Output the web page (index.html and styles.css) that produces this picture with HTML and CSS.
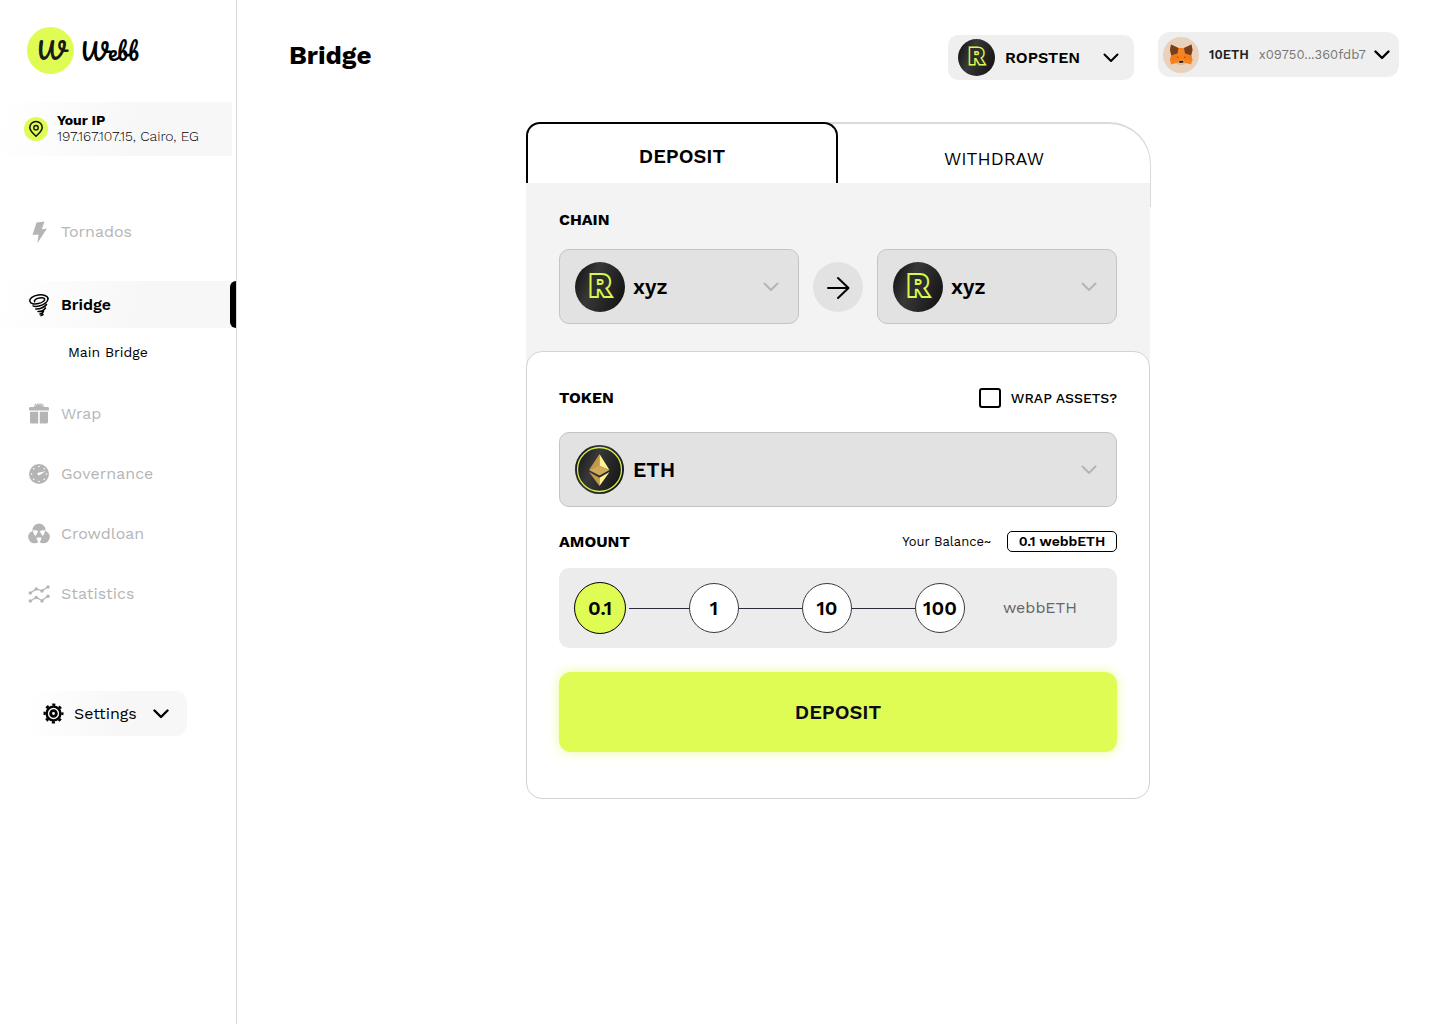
FILE: index.html
```html
<!DOCTYPE html>
<html lang="en">
<head>
<meta charset="utf-8">
<meta name="viewport" content="width=device-width, initial-scale=1">
<title>Webb - Bridge</title>
<link rel="stylesheet" href="styles.css">
</head>
<body>
<svg class="defs" width="0" height="0" aria-hidden="true">
  <defs>
    <linearGradient id="coin" x1="0" y1="0.3" x2="1" y2="0.7">
      <stop offset="0" stop-color="#171717"/>
      <stop offset="0.35" stop-color="#383838"/>
      <stop offset="0.6" stop-color="#2a2a2a"/>
      <stop offset="1" stop-color="#141414"/>
    </linearGradient>
    <symbol id="ropsten" viewBox="0 0 50 50">
      <circle cx="25" cy="25" r="25" fill="url(#coin)"/>
      <text x="25" y="34" text-anchor="middle" class="coin-letter">R</text>
    </symbol>
    <symbol id="chevron" viewBox="0 0 16 10">
      <path d="M1.500 1.500 8 8l6.500-6.500" fill="none" stroke="currentColor" stroke-linecap="round" stroke-linejoin="round"/>
    </symbol>
  </defs>
</svg>
<div class="app">
  <aside class="sidebar">
    <a class="logo" href="#"><span class="logo-mark" aria-hidden="true">W</span><span class="logo-name">Webb</span></a>

    <div class="ip">
      <svg class="ip-icon" viewBox="0 0 24 24" aria-hidden="true">
        <circle cx="12" cy="12" r="12" fill="#defc54"/>
        <path d="M12 19.200C8.300 16 5.800 13.300 5.800 10.600a6.200 6.200 0 0 1 12.400 0C18.200 13.300 15.700 16 12 19.200Z" fill="none" stroke="#111" stroke-width="1.500"/>
        <circle cx="12" cy="10.700" r="2.200" fill="none" stroke="#111" stroke-width="1.400"/>
      </svg>
      <div class="ip-text">
        <strong>Your IP</strong>
        <span>197.167.107.15, Cairo, EG</span>
      </div>
    </div>

    <nav class="nav" aria-label="Main">
      <a class="nav-item first" href="#">
        <svg viewBox="0 0 24 24"><path d="M9.500 2.500 17.500 1.500 14.800 9.200l5.200-.7L10.500 23l1-8.500-6 .5Z"/></svg>
        Tornados
      </a>
      <a class="nav-item active" href="#" aria-current="page">
        <svg class="stroked" viewBox="0 0 24 24">
          <path d="M21 5.500C20.700 2.700 16.200 1.300 11.200 2 6 2.800 2.300 5.500 2.800 8.200c.4 2.500 4.400 3.400 8.600 2.400 4-1 6.800-3.100 6.200-4.700-.6-1.400-4-1.600-7-.5-2.400 1-3.700 2.300-3 3.300"/>
          <path d="M21 5.500c.1 3.500-4 6.500-8.900 7.600-2.300.5-4.600.4-6-.3M19.500 11.500c-1.500 2.500-6.500 4.800-10.700 4.500M18.500 15c-1.500 2-4.700 3.700-7.500 3.600M16.500 18.500c-.8 1.300-2 2.200-3.500 2.500M16 21.500l-2 1.200"/>
        </svg>
        Bridge
      </a>
      <a class="nav-sub" href="#">Main Bridge</a>
      <a class="nav-item" href="#">
        <svg viewBox="0 0 24 24">
          <path d="M2 6.500C2 5.500 2.600 5 3.500 5h17c.9 0 1.500.5 1.500 1.500v1.500c0 .3-.2.500-.5.500h-19c-.3 0-.5-.2-.5-.5ZM3 9.800h8.200V21.500H4.500c-.8 0-1.500-.7-1.500-1.500ZM12.800 9.800H21V20c0 .8-.7 1.500-1.500 1.500h-6.700Z"/>
          <path class="line" d="M12 5 8 2M12 5l4-3M12 5l-1.400-3.700M12 5l1.400-3.700M11 5 6.800 3.800M13 5l4.200-1.200"/>
        </svg>
        Wrap
      </a>
      <a class="nav-item" href="#">
        <svg viewBox="0 0 24 24">
          <circle cx="12" cy="12" r="10"/>
          <g class="cut"><circle cx="12" cy="4.500" r="0.800"/><circle cx="6.700" cy="6.700" r="0.800"/><circle cx="4.500" cy="12" r="0.800"/><circle cx="6.700" cy="17.300" r="0.800"/><circle cx="12" cy="19.500" r="0.800"/><circle cx="17.300" cy="17.300" r="0.800"/><circle cx="19.500" cy="12" r="0.800"/><circle cx="17.300" cy="6.700" r="0.800"/><path d="M11 10.700 18.500 9.300l-5.700 3.600a1.400 1.400 0 1 1-1.800-2.200Z"/></g>
        </svg>
        Governance
      </a>
      <a class="nav-item" href="#">
        <svg viewBox="0 0 24 24">
          <circle cx="12" cy="8" r="6.500"/><circle cx="7.500" cy="15" r="6.300"/><circle cx="16.500" cy="15" r="6.300"/>
          <path class="cut" d="M6 8.500c1.800-.7 3.800-.3 5.200.7L8.500 14C7 12.700 6 10.700 6 8.500ZM18 8.500c-1.800-.7-3.800-.3-5.200.7l2.700 4.800c1.500-1.300 2.500-3.300 2.500-5.500ZM12 20.500c-1.600-1.300-2.400-3-2.400-5h4.800c0 2-.8 3.700-2.400 5Z"/>
        </svg>
        Crowdloan
      </a>
      <a class="nav-item" href="#">
        <svg viewBox="0 0 24 24">
          <path class="line" d="m3.500 11 5.700-4 5.800 1.800 6-4M3.500 19l5.700-3.500L15 18.500l6-4.500"/>
          <circle cx="3.300" cy="11" r="1.700"/><circle cx="9.200" cy="7" r="1.700"/><circle cx="15" cy="9" r="1.700"/><circle cx="21" cy="5" r="1.700"/>
          <circle cx="3.300" cy="19" r="1.700"/><circle cx="9.200" cy="15.500" r="1.700"/><circle cx="15" cy="19" r="1.700"/><circle cx="21" cy="14.300" r="1.700"/>
        </svg>
        Statistics
      </a>
    </nav>

    <button class="settings" type="button" aria-expanded="false">
      <svg class="gear" viewBox="0 0 22 22" aria-hidden="true">
        <circle cx="11" cy="11" r="7.200" fill="none" stroke="#000" stroke-width="2.600"/>
        <circle cx="11" cy="11" r="9.300" fill="none" stroke="#000" stroke-width="2.400" stroke-dasharray="3.300 4.004" stroke-dashoffset="1.650"/>
        <circle cx="11" cy="11" r="3" fill="none" stroke="#000" stroke-width="3"/>
      </svg>
      Settings
      <svg class="chevron bold" aria-hidden="true"><use href="#chevron"/></svg>
    </button>
  </aside>

  <main class="main">
    <header class="topbar">
      <h1>Bridge</h1>
      <div class="picker network">
        <svg class="coin" aria-hidden="true"><use href="#ropsten"/></svg>
        <select aria-label="Network"><option>ROPSTEN</option></select>
        <svg class="chevron" aria-hidden="true"><use href="#chevron"/></svg>
      </div>
      <button class="account" type="button">
        <svg class="avatar" viewBox="0 0 36 36" aria-hidden="true">
          <circle cx="18" cy="18" r="18" fill="#e8d2be"/>
          <path d="M8 7.500 15.500 11h5.500L28.500 7.500 29.500 13l-1 5.500 1 4.500-1.500 4.500-5.500-1.500-2.500 1.500h-4l-2.500-1.500-5.500 1.500L7 23l1-4.500L7 13Z" fill="#f5841f"/>
          <path d="M8 7.500 15.500 11 14.500 16.500l-6 2L7 13ZM28.500 7.500 21 11l1 5.500 6 2 1.500-5.500Z" fill="#763e1a"/>
          <path d="m8.500 18.500 6-2-.5 6.500-7 .200ZM28 18.500l-6-2 .5 6.500 7 .200Z" fill="#f07c1c"/>
          <path d="m14 19.500 2 .8-1.500.400ZM22.500 19.500l-2 .8 1.500.400Z" fill="#233447"/>
          <path d="m14.500 26 2-2h3.500l2 2-2 1.700h-3.500Z" fill="#d7c1b3"/>
          <path d="M16.500 24h3.500l.5 1.700h-4.500Z" fill="#161616"/>
        </svg>
        <strong>10ETH</strong>
        <span>x09750...360fdb7</span>
        <svg class="chevron bold" aria-hidden="true"><use href="#chevron"/></svg>
      </button>
    </header>

    <form class="bridge">
      <div class="tabs" role="tablist">
        <button class="tab selected" type="button" role="tab" aria-selected="true">DEPOSIT</button>
        <button class="tab" type="button" role="tab" aria-selected="false">WITHDRAW</button>
      </div>

      <section class="chain">
        <h2>CHAIN</h2>
        <div class="chain-row">
          <div class="picker field">
            <svg class="coin" aria-hidden="true"><use href="#ropsten"/></svg>
            <select aria-label="Source chain"><option>xyz</option></select>
            <svg class="chevron" aria-hidden="true"><use href="#chevron"/></svg>
          </div>
          <svg class="arrow" viewBox="0 0 50 50" aria-hidden="true">
            <circle cx="25" cy="25" r="25" fill="#e2e2e2"/>
            <path d="M15 26h20M25 16l10.500 10L25 36" fill="none" stroke="#000" stroke-width="2" stroke-linecap="round" stroke-linejoin="round"/>
          </svg>
          <div class="picker field">
            <svg class="coin" aria-hidden="true"><use href="#ropsten"/></svg>
            <select aria-label="Destination chain"><option>xyz</option></select>
            <svg class="chevron" aria-hidden="true"><use href="#chevron"/></svg>
          </div>
        </div>
      </section>

      <section class="card">
        <div class="row token-row">
          <label class="heading" for="token">TOKEN</label>
          <label class="wrap-assets"><input type="checkbox">WRAP ASSETS?</label>
        </div>
        <div class="picker field">
          <svg class="coin" viewBox="0 0 50 50" aria-hidden="true">
            <circle cx="24.500" cy="24.500" r="24.500" fill="url(#coin)"/>
            <circle cx="24.500" cy="24.500" r="22" fill="none" stroke="#d2f04c" stroke-width="1.300"/>
            <path d="M24.500 9 14 25l10.500-4Z" fill="#c29a4a"/>
            <path d="M24.500 9 34.500 25l-10-4Z" fill="#fdf38f"/>
            <path d="M24.500 20.500 34.500 25l-10 5.500L14 25Z" fill="#d0aa5c"/>
            <path d="m14 27 10.500 5.800V41Z" fill="#c29a4a"/>
            <path d="m34.500 27-10 5.800V41Z" fill="#fdf38f"/>
          </svg>
          <select id="token"><option>ETH</option></select>
          <svg class="chevron" aria-hidden="true"><use href="#chevron"/></svg>
        </div>

        <div class="row amount-row">
          <h2>AMOUNT</h2>
          <span class="balance-label">Your Balance~</span>
          <output class="balance">0.1 webbETH</output>
        </div>
        <div class="amounts">
          <div class="rail" role="radiogroup" aria-label="Amount">
            <label class="amount"><input type="radio" name="amount" checked><span>0.1</span></label>
            <i class="link from-active"></i>
            <label class="amount"><input type="radio" name="amount"><span>1</span></label>
            <i class="link"></i>
            <label class="amount"><input type="radio" name="amount"><span>10</span></label>
            <i class="link"></i>
            <label class="amount"><input type="radio" name="amount"><span>100</span></label>
          </div>
          <span class="unit">webbETH</span>
        </div>

        <button class="submit" type="submit">DEPOSIT</button>
      </section>
    </form>
  </main>
</div>
</body>
</html>
```

FILE: styles.css
```css
*,
*::before,
*::after {
  box-sizing: border-box;
}

body {
  margin: 0;
  background: #fff;
  color: #000;
  font-family: "Work Sans", Inter, sans-serif;
  font-size: 16px;
  line-height: 20px;
}

a {
  color: inherit;
  text-decoration: none;
}

button,
select,
input {
  margin: 0;
  color: inherit;
  font: inherit;
}

button {
  border: 0;
  cursor: pointer;
}

h1,
h2 {
  margin: 0;
}

svg {
  flex: none;
}

.defs {
  display: block;
}

.coin-letter {
  fill: #2e2e2e;
  stroke: #d9f84f;
  stroke-width: 4px;
  paint-order: stroke;
  font-family: "Work Sans", Inter, sans-serif;
  font-size: 31px;
  font-weight: 700;
}

.app {
  display: flex;
  min-height: 100vh;
}

/* Sidebar */

.sidebar {
  flex: none;
  width: 236px;
  padding-top: 27px;
  box-shadow: 1px 0 0 #d8d8d8;
}

.logo {
  display: flex;
  align-items: center;
  gap: 6px;
  margin-left: 27px;
  font-family: Pacifico, "Dancing Script", "Liberation Serif", serif;
  font-weight: 400;
}

.logo-mark {
  width: 47px;
  height: 47px;
  border-radius: 50%;
  background: #defc54;
  color: #1a1a1a;
  font-size: 24px;
  line-height: 47px;
  text-align: center;
}

.logo-name {
  font-size: 23px;
}

.ip {
  display: flex;
  align-items: center;
  gap: 9px;
  height: 54px;
  margin: 28px 4px 0 0;
  padding-left: 24px;
  background: linear-gradient(100deg, #fff, #f7f7f7 60%);
}

.ip-icon {
  width: 24px;
  height: 24px;
}

.ip-text {
  display: flex;
  flex-direction: column;
  padding-bottom: 2px;
  line-height: 16px;
}

.ip-text strong {
  font-size: 14px;
  font-weight: 700;
}

.ip-text span {
  font-size: 14px;
  font-weight: 300;
}

.nav {
  display: flex;
  flex-direction: column;
  gap: 13px;
  margin-top: 52px;
}

.nav-item {
  display: flex;
  align-items: center;
  gap: 10px;
  height: 47px;
  padding-left: 27px;
  color: #b5b5b5;
}

.nav-item svg {
  width: 24px;
  height: 24px;
  fill: #b5b5b5;
}

.nav-item .line {
  fill: none;
  stroke: #b5b5b5;
  stroke-width: 1.2px;
}

.nav-item .cut {
  fill: #fff;
}

.nav-item .stroked {
  fill: none;
  stroke: #000;
  stroke-width: 1.5px;
  stroke-linecap: round;
}

.nav-item.first {
  margin-bottom: 13px;
}

.nav-item.active {
  background: linear-gradient(100deg, #fff, #f7f7f7 60%);
  color: #000;
  font-weight: 600;
}

.nav-item.active::after {
  content: "";
  align-self: stretch;
  width: 6px;
  margin-left: auto;
  border-radius: 6px 0 0 6px;
  background: #000;
}

.nav-sub {
  margin-top: -13px;
  padding-left: 68px;
  font-size: 14px;
  line-height: 49px;
}

.settings {
  display: flex;
  align-items: center;
  gap: 10px;
  width: 160px;
  height: 45px;
  margin: 74px 0 0 27px;
  padding: 0 18px 0 16px;
  border-radius: 12px;
  background: linear-gradient(100deg, #fff, #f7f7f7 60%);
}

.gear {
  width: 21px;
  height: 21px;
}

/* Shared controls */

.chevron {
  width: 16px;
  height: 10px;
  stroke-width: 2px;
}

.chevron.bold {
  stroke-width: 2.4px;
}

.settings .chevron {
  margin-left: auto;
}

.picker {
  display: grid;
  grid-template-columns: auto 1fr auto;
  align-items: center;
}

.picker .coin {
  grid-area: 1 / 1;
  pointer-events: none;
  z-index: 1;
}

.picker select {
  grid-area: 1 / 1 / 2 / 4;
  width: 100%;
  height: 100%;
  border: 0;
  background: none;
  appearance: none;
}

.picker .chevron {
  grid-area: 1 / 3;
  pointer-events: none;
}

/* Top bar */

.main {
  flex: 1;
  min-width: 0;
  padding-top: 32px;
}

.topbar {
  display: flex;
  height: 48px;
  padding: 0 41px 0 53px;
}

.topbar h1 {
  margin-right: auto;
  font-size: 26px;
  line-height: 46px;
  font-weight: 700;
}

.network {
  align-self: flex-end;
  width: 186px;
  height: 45px;
  margin-right: 24px;
  border-radius: 10px;
  background: #efefef;
}

.network .coin {
  width: 37px;
  height: 37px;
  margin-left: 10px;
}

.network select {
  padding: 0 0 0 57px;
  font-weight: 600;
}

.network .chevron {
  margin-right: 15px;
}

.account {
  display: flex;
  align-items: center;
  width: 241px;
  height: 45px;
  padding: 0 9px 0 5px;
  border-radius: 12px;
  background: #efefef;
  font-size: 13px;
}

.avatar {
  width: 36px;
  height: 36px;
  margin-right: 10px;
}

.account strong {
  margin-right: 10px;
  color: #222;
  font-weight: 600;
}

.account span {
  color: #777;
}

.account .chevron {
  margin-left: auto;
}

/* Bridge form */

.bridge {
  width: 624px;
  max-width: 100%;
  margin: 42px auto 0;
}

.tabs {
  display: flex;
  margin-right: -1px;
}

.tab {
  flex: 1;
  margin: 0 0 -24px -14px;
  padding: 0 0 14px 14px;
  border: solid #dadada;
  border-width: 2px 1px 0 0;
  border-radius: 0 42px 0 0;
  background: #fff;
  font-size: 18px;
}

.tab.selected {
  flex: none;
  z-index: 1;
  width: 312px;
  height: 61px;
  margin: 0;
  padding: 4px 0 0;
  border: solid #000;
  border-width: 2px 2px 0;
  border-radius: 14px 14px 0 0;
  background: #fff;
  font-size: 20px;
  font-weight: 600;
}

.chain {
  position: relative;
  padding: 27px 33px 41px;
  background: #f3f3f3;
}

.bridge h2,
.heading {
  font-size: 16px;
  line-height: 20px;
  font-weight: 700;
}

.chain-row {
  display: flex;
  align-items: center;
  gap: 14px;
  margin-top: 19px;
}

.chain-row .field {
  flex: 1;
}

.arrow {
  width: 50px;
  height: 50px;
}

.field {
  height: 75px;
  border: 1px solid #c4c4c4;
  border-radius: 10px;
  background: #e2e2e2;
}

.field .coin {
  width: 50px;
  height: 50px;
  margin-left: 15px;
}

.field select {
  padding: 0 0 0 73px;
  font-size: 21px;
  line-height: 28px;
  font-weight: 600;
}

.field .chevron {
  margin-right: 19px;
  color: #b5b5b5;
}

.card {
  position: relative;
  margin-top: -14px;
  padding: 36px 32px 46px;
  border: 1px solid #d3d3d3;
  border-radius: 16px;
  background: #fff;
}

.row {
  display: flex;
  align-items: center;
}

.token-row {
  justify-content: space-between;
  margin-bottom: 24px;
}

.wrap-assets {
  display: flex;
  align-items: center;
  gap: 10px;
  font-size: 14px;
  font-weight: 500;
}

.wrap-assets input {
  width: 22px;
  height: 20px;
  border: 2px solid #000;
  border-radius: 3px;
  appearance: none;
}

.amount-row {
  margin: 24px 0 16px;
}

.balance-label {
  margin-left: auto;
  font-size: 13px;
}

.balance {
  margin-left: 16px;
  width: 110px;
  height: 21px;
  border: 1px solid #000;
  border-radius: 5px;
  font-size: 14px;
  line-height: 19px;
  font-weight: 600;
  text-align: center;
}

.amounts {
  display: flex;
  align-items: center;
  gap: 38px;
  height: 80px;
  padding: 0 38px 0 15px;
  border-radius: 10px;
  background: #ececec;
}

.rail {
  display: flex;
  flex: 1;
  align-items: center;
}

.amount {
  display: grid;
  place-items: center;
  font-size: 20px;
  font-weight: 600;
}

.amount input,
.amount span {
  grid-area: 1 / 1;
}

.amount input {
  width: 50px;
  height: 50px;
  border: 1px solid #3a3a46;
  border-radius: 50%;
  background: #fff;
  appearance: none;
}

.amount input:checked {
  width: 52px;
  height: 52px;
  border-color: #000;
  background: #defc54;
}

.link {
  flex: 1;
  height: 1px;
  background: #2b2b3a;
}

.link.from-active {
  background: linear-gradient(to right, transparent 3px, #2b2b3a 3px);
}

.unit {
  width: 76px;
  color: #666;
}

.submit {
  width: 100%;
  height: 80px;
  margin-top: 24px;
  border-radius: 12px;
  background: #defc54;
  box-shadow: 0 0 12px rgba(222, 252, 84, 0.6);
  color: #0b0b1a;
  font-size: 20px;
  font-weight: 600;
}
```
